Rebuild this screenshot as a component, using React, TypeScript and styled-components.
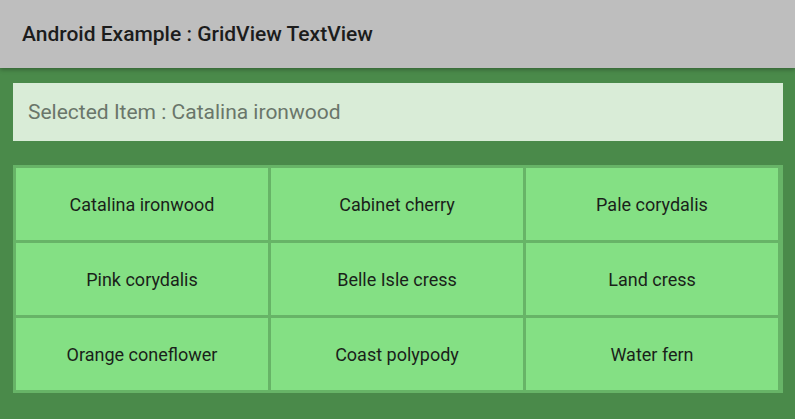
import React from "react";
import styled, { createGlobalStyle } from "styled-components";

const Global = createGlobalStyle`
  html, body { margin: 0; padding: 0; }
  body {
    background: #4a8a4a;
    font-family: Roboto, "Noto Sans", sans-serif;
    width: 795px;
    height: 419px;
    overflow: hidden;
  }
`;

const Screen = styled.div`
  display: flex;
  flex-direction: column;
  width: 795px;
  height: 419px;
  background: #4a8a4a;
`;

const Toolbar = styled.header`
  height: 68px;
  display: flex;
  align-items: center;
  padding-left: 22px;
  background: #bebebe;
  box-shadow: 0 2px 4px rgba(0, 0, 0, 0.25);
  position: relative;
  z-index: 1;
  flex-shrink: 0;
`;

const Title = styled.h1`
  margin: 0;
  font-family: Roboto, sans-serif;
  font-weight: 500;
  font-size: 21px;
  color: #1c1c1c;
`;

const Content = styled.main`
  display: flex;
  flex-direction: column;
  padding: 15px 12px 0 13px;
  gap: 24px;
`;

const Selected = styled.div`
  height: 58px;
  display: flex;
  align-items: center;
  padding-left: 15px;
  background: #d9ecd7;
  font-size: 21px;
  color: #6a766a;
`;

const Grid = styled.div`
  display: grid;
  grid-template-columns: repeat(3, 252px);
  grid-auto-rows: 72px;
  gap: 3px;
  padding: 3px 5px 3px 3px;
  background: #67b467;
  width: max-content;
`;

const Cell = styled.div`
  display: flex;
  align-items: center;
  justify-content: center;
  background: #84e084;
  font-size: 18px;
  color: #1a1f1a;
`;

const items = [
  "Catalina ironwood",
  "Cabinet cherry",
  "Pale corydalis",
  "Pink corydalis",
  "Belle Isle cress",
  "Land cress",
  "Orange coneflower",
  "Coast polypody",
  "Water fern",
];

export default function App() {
  return (
    <>
      <Global />
      <Screen>
        <Toolbar>
          <Title>Android Example : GridView TextView</Title>
        </Toolbar>
        <Content>
          <Selected>Selected Item : Catalina ironwood</Selected>
          <Grid>
            {items.map((t) => (
              <Cell key={t}>{t}</Cell>
            ))}
          </Grid>
        </Content>
      </Screen>
    </>
  );
}
